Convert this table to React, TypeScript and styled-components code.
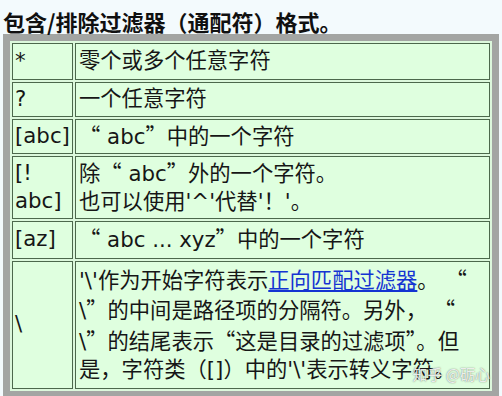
import React from "react";
import styled, { createGlobalStyle } from "styled-components";

const Global = createGlobalStyle`
  html, body {
    margin: 0;
    padding: 0;
    background: #f3fafd;
  }
  body {
    font-family: "DejaVu Sans", "Noto Sans CJK SC", sans-serif;
    color: #161616;
  }
`;

const Page = styled.div`
  position: relative;
  width: 502px;
  height: 396px;
  overflow: hidden;
`;

const Title = styled.h1`
  margin: 0;
  padding: 8px 0 0 3px;
  height: 26px;
  font-family: "Noto Sans CJK SC", sans-serif;
  font-size: 22px;
  font-weight: 700;
  line-height: 26px;
  color: #101010;
`;

const Table = styled.table`
  margin-left: 3px;
  width: 496px;
  table-layout: fixed;
  border-collapse: separate;
  border-spacing: 2px;
  border: 7px solid #a3a5a3;
  background: #dcf8dc;
`;

const Row = styled.tr<{ $h: number }>`
  height: ${(p) => p.$h}px;
`;

const Cell = styled.td`
  border: 1px solid #4c684c;
  background: #dfffdf;
  vertical-align: middle;
  font-size: 21.3px;
  line-height: 28.5px;
`;

const KeyCell = styled(Cell)`
  width: 56px;
  padding: 1px 1px 1px 2px;
`;

const DescCell = styled(Cell)`
  padding: 1px 2px 1px 3px;
`;

const Q = styled.span`
  font-family: "Noto Sans CJK SC", sans-serif;
`;

const Link = styled.a`
  color: #1434d2;
  text-decoration: underline;
  text-underline-offset: 2px;
`;

const Watermark = styled.div`
  position: absolute;
  right: 12px;
  bottom: 13px;
  font-family: "Noto Sans CJK SC", sans-serif;
  font-size: 15px;
  line-height: 18px;
  color: rgba(255, 255, 255, 0.85);
  text-shadow: 0 0 1px rgba(60, 60, 60, 0.55), 0 0 2px rgba(60, 60, 60, 0.3);
  pointer-events: none;
`;

const rows: { key: React.ReactNode; h: number; desc: React.ReactNode }[] = [
  { key: "*", h: 37, desc: "零个或多个任意字符" },
  { key: "?", h: 35, desc: "一个任意字符" },
  {
    key: "[abc]",
    h: 34,
    desc: (
      <>
        <Q>“</Q> abc<Q>”</Q>中的一个字符
      </>
    ),
  },
  {
    key: "[! abc]",
    h: 58,
    desc: (
      <>
        除<Q>“</Q> abc<Q>”</Q>外的一个字符。
        <br />
        也可以使用'^'代替'！'。
      </>
    ),
  },
  {
    key: "[az]",
    h: 38,
    desc: (
      <>
        <Q>“</Q> abc ... xyz<Q>”</Q>中的一个字符
      </>
    ),
  },
  {
    key: "\\",
    h: 128,
    desc: (
      <>
        '\'作为开始字符表示<Link href="#">正向匹配过滤器</Link>。 <Q>“</Q>
        <br />
        \<Q>”</Q>的中间是路径项的分隔符。另外， <Q>“</Q>
        <br />
        \<Q>”</Q>的结尾表示<Q>“</Q>这是目录的过滤项<Q>”</Q>。但
        <br />
        是，字符类（[]）中的'\'表示转义字符。
      </>
    ),
  },
];

export default function App() {
  return (
    <Page>
      <Global />
      <Title>包含/排除过滤器（通配符）格式。</Title>
      <Table>
        <tbody>
          {rows.map((r, i) => (
            <Row key={i} $h={r.h}>
              <KeyCell>{r.key}</KeyCell>
              <DescCell>{r.desc}</DescCell>
            </Row>
          ))}
        </tbody>
      </Table>
      <Watermark>知乎 @砺心</Watermark>
    </Page>
  );
}
